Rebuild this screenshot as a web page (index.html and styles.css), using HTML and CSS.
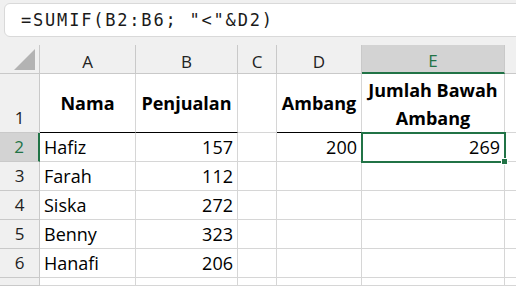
FILE: index.html
```html
<!DOCTYPE html>
<html>
<head>
<meta charset="utf-8">
<link rel="stylesheet" href="styles.css">
</head>
<body>
<div class="topbar">
  <div class="formula">=SUMIF(B2:B6; "&lt;"&amp;D2)</div>
</div>
<div class="sheet">
  <div class="hd corner"><svg width="22" height="22" viewBox="0 0 22 22"><polygon points="21,0 21,21 0,21" fill="#b3b3b3"/></svg></div>
  <div class="hd col">A</div>
  <div class="hd col">B</div>
  <div class="hd col">C</div>
  <div class="hd col">D</div>
  <div class="hd col sel">E</div>
  <div class="hd col last"></div>

  <div class="hd row r1">1</div>
  <div class="c head thick">Nama</div>
  <div class="c head thick">Penjualan</div>
  <div class="c"></div>
  <div class="c head thick">Ambang</div>
  <div class="c head thick wrap">Jumlah Bawah Ambang</div>
  <div class="c last"></div>

  <div class="hd row selrow">2</div>
  <div class="c">Hafiz</div>
  <div class="c num">157</div>
  <div class="c"></div>
  <div class="c num">200</div>
  <div class="c num active">269<span class="handle"></span></div>
  <div class="c last"></div>

  <div class="hd row">3</div>
  <div class="c">Farah</div>
  <div class="c num">112</div>
  <div class="c"></div>
  <div class="c"></div>
  <div class="c"></div>
  <div class="c last"></div>

  <div class="hd row">4</div>
  <div class="c">Siska</div>
  <div class="c num">272</div>
  <div class="c"></div>
  <div class="c"></div>
  <div class="c"></div>
  <div class="c last"></div>

  <div class="hd row">5</div>
  <div class="c">Benny</div>
  <div class="c num">323</div>
  <div class="c"></div>
  <div class="c"></div>
  <div class="c"></div>
  <div class="c last"></div>

  <div class="hd row">6</div>
  <div class="c">Hanafi</div>
  <div class="c num">206</div>
  <div class="c"></div>
  <div class="c"></div>
  <div class="c"></div>
  <div class="c last"></div>

  <div class="hd row"></div>
  <div class="c"></div>
  <div class="c"></div>
  <div class="c"></div>
  <div class="c"></div>
  <div class="c"></div>
  <div class="c last"></div>
</div>
</body>
</html>
```

FILE: styles.css
```css
* { box-sizing: border-box; }
html, body { margin: 0; padding: 0; }
body {
  width: 516px;
  height: 286px;
  overflow: hidden;
  background: #f0f0f0;
  font-family: "Open Sans", "Noto Sans", sans-serif;
  color: #000;
}
.topbar {
  height: 45px;
  padding: 3px 0 0 4px;
  overflow: hidden;
}
.formula {
  width: 540px;
  height: 34px;
  background: #fff;
  border: 1px solid #d9d9d9;
  border-radius: 6px;
  padding-left: 16px;
  font-family: "DejaVu Sans Mono", monospace;
  font-size: 17px;
  letter-spacing: 1.8px;
  line-height: 32px;
  color: #1a1a1a;
}
.sheet {
  display: grid;
  grid-template-columns: 40px 96px 102px 39px 85px 143px 1fr;
  grid-template-rows: 29px 59px repeat(5, 29px) 8px;
  background: #fff;
  overflow: hidden;
}
.c, .hd {
  border-right: 1px solid #d6d6d6;
  border-bottom: 1px solid #d6d6d6;
  font-size: 18px;
  white-space: nowrap;
  position: relative;
}
.c {
  display: flex;
  align-items: flex-end;
  padding: 0 4px 1px 4px;
  line-height: 26px;
}
.c.num { justify-content: flex-end; padding-right: 4px; }
.c.head {
  font-weight: 700;
  justify-content: center;
  align-items: center;
  text-align: center;
  padding-bottom: 0;
}
.c.wrap { white-space: normal; line-height: 28px; padding-top: 2px; }
.c.thick { border-bottom-color: #000; }
.c.last { border-right: none; }
.hd {
  background: #f0f0f0;
  border-color: #c9c9c9;
  color: #222;
  font-size: 17px;
  display: flex;
  justify-content: center;
}
.hd.col { align-items: center; padding-top: 4px; }
.hd.col.last { border-right: none; }
.hd.corner { align-items: flex-end; justify-content: flex-end; padding: 0 3px 2px 0; }
.hd.row { align-items: flex-end; line-height: 26px; padding-bottom: 1px; }
.hd.sel {
  background: #d3d3d3;
  color: #217346;
  border-bottom: 2px solid #217346;
}
.hd.selrow {
  background: #d3d3d3;
  color: #217346;
  border-right: 2px solid #217346;
}
.c.active {
  outline: 2px solid #217346;
  outline-offset: -1px;
  z-index: 1;
}
.handle {
  position: absolute;
  right: -4px;
  bottom: -4px;
  width: 7px;
  height: 7px;
  background: #217346;
  border: 1px solid #fff;
}
```
